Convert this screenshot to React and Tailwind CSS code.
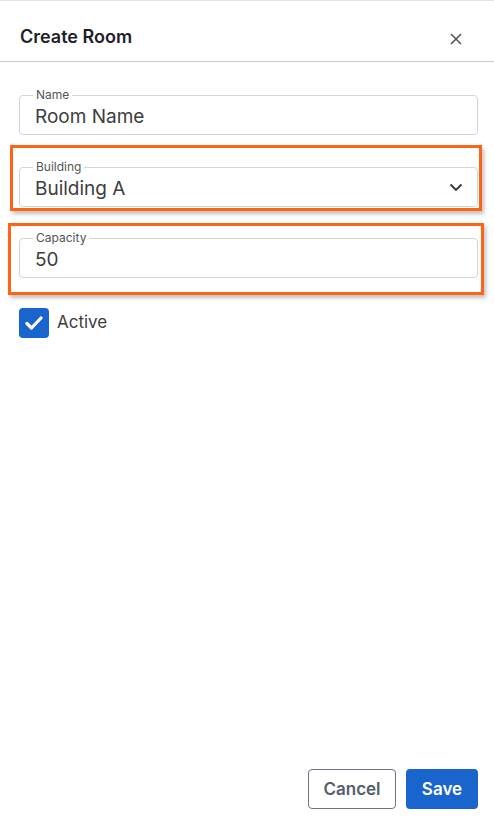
import { useState } from "react";

function Field({ label, children, right }) {
  return (
    <div className="relative h-[40px] rounded-[4px] border border-[#d2d5da] flex items-center pl-[15px] pr-[14px]">
      <span className="absolute -top-[8px] left-[13px] bg-white px-[3px] text-[12px] leading-[14px] text-[#555]">
        {label}
      </span>
      <div className="flex-1 pt-[3px] text-[19px] leading-[24px] text-[#3d3d3d]">{children}</div>
      {right}
    </div>
  );
}

export default function App() {
  const [active, setActive] = useState(true);

  return (
    <div
      className="h-[826px] w-full flex flex-col bg-white border-t border-[#e3e3e3]"
      style={{ fontFamily: "Inter, 'Open Sans', sans-serif" }}
    >
      <div className="h-[61px] flex items-center justify-between pl-[20px] pr-[32px] pt-[10px] border-b border-[#c8c8c8]">
        <h2 className="text-[18px] font-semibold text-[#1e1e2a]">Create Room</h2>
        <button className="text-[#555] pt-[6px]">
          <svg width="12" height="12" viewBox="0 0 12 12" fill="none" stroke="currentColor" strokeWidth="1.6">
            <path d="M1 1l10 10M11 1L1 11" />
          </svg>
        </button>
      </div>

      <div className="flex-1 pl-[19px] pr-[16px] pt-[33px]">
        <Field label="Name">Room Name</Field>

        <div className="mt-[10px] -ml-[9px] -mr-[4px] border-[3px] border-[#ff6316] pl-[6px] pr-[1px] pt-[19px] pb-[1px] shadow-[2px_3px_4px_rgba(0,0,0,0.25)]">
          <Field
            label="Building"
            right={
              <svg width="14" height="9" viewBox="0 0 14 9" fill="none" stroke="#333" strokeWidth="1.8">
                <path d="M1.5 1.5l5.5 5.5 5.5-5.5" />
              </svg>
            }
          >
            Building A
          </Field>
        </div>

        <div className="mt-[12px] -ml-[11px] -mr-[6px] border-[3px] border-[#ff6316] pl-[8px] pr-[3px] pt-[12px] pb-[14px] shadow-[2px_3px_4px_rgba(0,0,0,0.25)]">
          <Field label="Capacity">50</Field>
        </div>

        <label className="mt-[13px] flex items-center gap-[8px] cursor-pointer">
          <button
            onClick={() => setActive(!active)}
            className="w-[30px] h-[30px] rounded-[4px] bg-[#1a64cd] flex items-center justify-center"
          >
            {active && (
              <svg width="18" height="14" viewBox="0 0 18 14" fill="none" stroke="white" strokeWidth="3.2" strokeLinecap="round" strokeLinejoin="round">
                <path d="M2 7.5l4.5 4.5L16 2" />
              </svg>
            )}
          </button>
          <span className="text-[17px] text-[#3d3d3d]">Active</span>
        </label>
      </div>

      <div className="flex justify-end gap-[10px] pr-[16px] pb-[17px]">
        <button className="w-[88px] h-[40px] pt-[2px] rounded-[4px] border border-[#6b7280] text-[17px] font-semibold text-[#555d6b]">
          Cancel
        </button>
        <button className="w-[72px] h-[40px] pt-[2px] rounded-[4px] bg-[#1a64cd] text-[17px] font-semibold text-white">
          Save
        </button>
      </div>
    </div>
  );
}
